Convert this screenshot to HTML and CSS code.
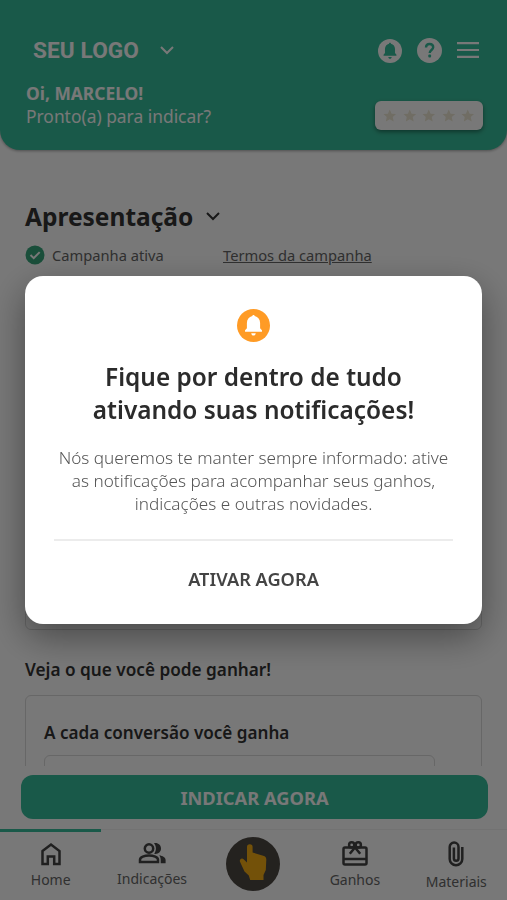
FILE: index.html
```html
<!DOCTYPE html>
<html lang="pt-BR">
<head>
    <meta charset="UTF-8">
    <meta name="viewport" content="width=device-width, initial-scale=1.0">
    <title>Apresentação</title>
    <link rel="stylesheet" href="styles.css">
</head>
<body>

    <header class="header">
        <div class="header-top">
            <div class="logo">
                <span>SEU LOGO</span>
                <svg class="chevron" width="14" height="9" viewBox="0 0 14 9"><path d="M1 1l6 6 6-6"/></svg>
            </div>
            <div class="header-icons">
                <svg class="bell" width="24" height="24" viewBox="0 0 32 32">
                    <circle cx="16" cy="16" r="16"/>
                    <path d="M16 5c-.8 0-1.3.6-1.3 1.2-3.2.8-5.4 3.5-5.4 7v5.5l-1.9 2.2v1.5h17.2v-1.5l-1.9-2.2v-5.5c0-3.5-2.2-6.2-5.4-7 0-.6-.5-1.2-1.3-1.2zM13.7 24h4.6c-.2 1.6-1 2.4-2.3 2.4s-2.1-.8-2.3-2.4z"/>
                </svg>
                <svg class="help" width="25" height="25" viewBox="0 0 25 25">
                    <circle cx="12.5" cy="12.5" r="12.5"/>
                    <path d="M9 9.6c0-2.3 1.5-3.6 3.6-3.6s3.6 1.3 3.6 3.3c0 2.6-3.5 2.8-3.5 5.7"/>
                    <rect x="11.3" y="16.6" width="2.8" height="2.8" rx="1"/>
                </svg>
                <svg class="menu" width="22" height="16" viewBox="0 0 22 16"><path d="M0 1.1h22M0 8h22M0 14.9h22"/></svg>
            </div>
        </div>
        <div class="header-bottom">
            <p class="greeting"><strong>Oi, MARCELO!</strong><br>Pronto(a) para indicar?</p>
            <div class="rating">
                <svg viewBox="0 0 24 24"><path d="M12 1l3.3 7.3 7.9.8-5.9 5.3 1.7 7.9-7-4.1-7 4.1 1.7-7.9L.8 9.1l7.9-.8z"/></svg>
                <svg viewBox="0 0 24 24"><path d="M12 1l3.3 7.3 7.9.8-5.9 5.3 1.7 7.9-7-4.1-7 4.1 1.7-7.9L.8 9.1l7.9-.8z"/></svg>
                <svg viewBox="0 0 24 24"><path d="M12 1l3.3 7.3 7.9.8-5.9 5.3 1.7 7.9-7-4.1-7 4.1 1.7-7.9L.8 9.1l7.9-.8z"/></svg>
                <svg viewBox="0 0 24 24"><path d="M12 1l3.3 7.3 7.9.8-5.9 5.3 1.7 7.9-7-4.1-7 4.1 1.7-7.9L.8 9.1l7.9-.8z"/></svg>
                <svg viewBox="0 0 24 24"><path d="M12 1l3.3 7.3 7.9.8-5.9 5.3 1.7 7.9-7-4.1-7 4.1 1.7-7.9L.8 9.1l7.9-.8z"/></svg>
            </div>
        </div>
    </header>

    <main class="content">
        <h1>
            <span>Apresentação</span>
            <svg class="chevron" width="14" height="9" viewBox="0 0 14 9"><path d="M1 1l6 6 6-6"/></svg>
        </h1>
        <div class="campaign">
            <svg width="20" height="20" viewBox="0 0 20 20">
                <circle cx="10" cy="10" r="9.5"/>
                <path d="M5.5 10l3.2 3.1 6-6"/>
            </svg>
            <span class="status">Campanha ativa</span>
            <a class="terms">Termos da campanha</a>
        </div>
        <div class="banner"></div>
        <h2>Veja o que você pode ganhar!</h2>
        <div class="card">
            <h3>A cada conversão você ganha</h3>
            <div class="card-value"></div>
        </div>
    </main>

    <div class="action">
        <button class="btn-refer">INDICAR AGORA</button>
    </div>

    <nav class="nav">
        <a class="nav-item active">
            <svg width="24" height="24" viewBox="0 0 24 24"><path d="M3.5 9L12 2.5 20.5 9v13h-5.3v-7.5H8.8V22H3.5z"/></svg>
            <span>Home</span>
        </a>
        <a class="nav-item">
            <svg width="30" height="24" viewBox="0 0 30 24">
                <circle cx="12" cy="7.5" r="4.2"/>
                <path d="M3 21v-2.3c0-2.7 4.5-4.2 9-4.2s9 1.5 9 4.2V21z"/>
                <path class="solid" d="M17 2.2c3.8-.8 7 1.7 7 5.3s-3.2 6.1-7 5.3c2.6-3 2.6-7.6 0-10.6zM22.2 14.2c3.6.6 6.4 2.2 6.4 4.8v3.2h-4.9V19c0-1.9-.5-3.5-1.5-4.8z"/>
            </svg>
            <span>Indicações</span>
        </a>
        <a class="nav-item point">
            <svg width="28" height="37" viewBox="0 0 28 37">
                <path d="M8 3a2.8 2.8 0 0 1 5.6 0v5.5L24.2 11.8c2.2.7 3.2 1.8 3.1 4L26.8 26l-2.3 5v5H11.2L9.8 31.5 5.5 27.5 1 17.8c-.9-2.2 1.6-4.4 3.6-2.6L8 18.5z"/>
            </svg>
        </a>
        <a class="nav-item">
            <svg width="26" height="25" viewBox="0 0 26 25">
                <rect x="1.5" y="6.5" width="23" height="17" rx="1.5"/>
                <path d="M1.5 18h23M13 6.5L7.8 12.8M13 6.5l5.2 6.3"/>
                <circle cx="9.7" cy="3.9" r="2.6"/>
                <circle cx="16.3" cy="3.9" r="2.6"/>
            </svg>
            <span>Ganhos</span>
        </a>
        <a class="nav-item files">
            <svg width="18" height="26" viewBox="0 0 18 26"><path d="M15.3 6v12a6.3 6.3 0 0 1-12.6 0V6a4.4 4.4 0 0 1 8.8 0v11.5a2.3 2.3 0 0 1-4.6 0V6.5"/></svg>
            <span>Materiais</span>
        </a>
    </nav>

    <div class="overlay">
        <div class="modal">
            <svg class="modal-icon" width="33" height="33" viewBox="0 0 32 32">
                <circle cx="16" cy="16" r="16"/>
                <path d="M16 5.7c-.8 0-1.2.6-1.2 1.2-3.2.8-5.2 3.3-5.2 6.6v5.2l-1.8 2v1.4h16.4v-1.4l-1.8-2v-5.2c0-3.3-2-5.8-5.2-6.6 0-.6-.4-1.2-1.2-1.2zM13.8 23.6h4.4c-.2 1.6-1 2.2-2.2 2.2s-2-.6-2.2-2.2z"/>
            </svg>
            <h2 class="modal-title">Fique por dentro de tudo<br>ativando suas notificações!</h2>
            <p class="modal-text">Nós queremos te manter sempre informado: ative<br>as notificações para acompanhar seus ganhos,<br>indicações e outras novidades.</p>
            <button class="modal-btn">ATIVAR AGORA</button>
        </div>
    </div>

</body>
</html>
```
FILE: styles.css
```css
* {
    box-sizing: border-box;
}
body {
    display: flex;
    flex-direction: column;
    height: 900px;
    margin: 0;
    overflow: hidden;
    background-color: #fff;
    color: #333;
    font-family: 'Noto Sans', sans-serif;
}
h1, h2, h3, p {
    margin: 0;
}
svg {
    display: block;
    flex: none;
}
button {
    border: none;
    font-family: inherit;
    cursor: pointer;
}
.chevron {
    fill: none;
    stroke: currentColor;
    stroke-width: 2;
}

/* Header */
.header {
    flex: none;
    height: 150px;
    padding: 36px 24px 0 26px;
    background-color: #37bd9b;
    border-radius: 0 0 20px 20px;
    box-shadow: 0 1px 3px rgba(0, 0, 0, 0.35);
    color: #fff;
}
.header-top, .header-bottom {
    display: flex;
    justify-content: space-between;
}
.header-top {
    align-items: center;
    height: 28px;
    padding: 0 4px 0 7px;
}
.logo {
    display: flex;
    align-items: center;
    gap: 21px;
    font: bold 22.6px Roboto, sans-serif;
    letter-spacing: 0.1px;
}
.header-icons {
    display: flex;
    align-items: center;
    gap: 15px;
}
.bell {
    margin-top: 2px;
}
.bell circle, .help circle {
    fill: #fff;
}
.bell path, .help rect {
    fill: #37bd9b;
}
.help path {
    fill: none;
    stroke: #37bd9b;
    stroke-width: 2.4;
}
.menu path {
    stroke: #fff;
    stroke-width: 2.2;
}
.greeting {
    padding-top: 18px;
    font-size: 17.4px;
    line-height: 23.4px;
}
.rating {
    display: flex;
    align-items: center;
    justify-content: center;
    gap: 6px;
    width: 108px;
    height: 29px;
    margin-top: 37px;
    border-radius: 6px;
    background-color: #fff;
    box-shadow: 0 2px 4px rgba(0, 0, 0, 0.4);
}
.rating svg {
    width: 13.5px;
    height: 13.5px;
    fill: #eee8d4;
}

/* Content */
.content {
    flex: none;
    height: 616px;
    padding: 48px 25px 0;
    overflow: hidden;
}
.content h1 {
    display: flex;
    align-items: center;
    gap: 13px;
    height: 36px;
    font-size: 24.5px;
    font-weight: 700;
}
.campaign {
    display: flex;
    align-items: center;
    height: 24px;
    margin-top: 9px;
    font-size: 14.7px;
    color: #666;
}
.campaign circle {
    fill: #37a67b;
}
.campaign path {
    fill: none;
    stroke: #fff;
    stroke-width: 2;
}
.status {
    width: 171px;
    margin-left: 7px;
}
.terms {
    text-decoration: underline;
}
.banner {
    height: 343px;
    margin-top: 20px;
    border: 1px solid #dadada;
    border-radius: 6px;
}
.content > h2 {
    margin-top: 28px;
    font-size: 17.2px;
    font-weight: 600;
    line-height: 24px;
}
.card {
    height: 120px;
    margin-top: 13px;
    padding: 25px 46px 0 18px;
    border: 1px solid #dadada;
    border-radius: 6px;
}
.card h3 {
    font-size: 17.1px;
    font-weight: 600;
    line-height: 24px;
}
.card-value {
    height: 50px;
    margin-top: 10px;
    border: 1px solid #dadada;
    border-radius: 6px;
}

/* Bottom action */
.action {
    flex: none;
    height: 63px;
    padding: 9px 19px 0 21px;
}
.btn-refer {
    width: 100%;
    height: 44px;
    border-radius: 12px;
    background-color: #37bd9b;
    color: #fff;
    font-size: 18.3px;
    font-weight: 700;
}

/* Navigation */
.nav {
    display: grid;
    grid-template-columns: repeat(5, 1fr);
    height: 71px;
    border-top: 1px solid #f2f2f2;
    font-size: 14px;
    color: #666;
}
.nav-item {
    display: flex;
    flex-direction: column;
    align-items: center;
    gap: 4px;
    padding-top: 11px;
    line-height: 20px;
}
.nav-item svg {
    fill: none;
    stroke: #444;
    stroke-width: 2.5;
}
.nav-item.active {
    margin-top: -1px;
    padding-top: 10px;
    border-top: 3px solid #37bd9b;
}
.nav-item .solid {
    fill: #444;
    stroke: none;
}
.nav-item.files {
    gap: 5px;
}
.nav-item.point {
    justify-content: center;
    width: 54px;
    height: 54px;
    margin: 7px auto 0;
    padding: 0 0 3px;
    border-radius: 50%;
    background-color: #4d4843;
}
.nav-item.point svg {
    fill: #f5ac14;
    stroke: none;
}

/* Modal */
.overlay {
    position: fixed;
    inset: 0;
    display: flex;
    justify-content: center;
    align-items: center;
    background-color: rgba(0, 0, 0, 0.53);
}
.modal {
    width: 457px;
    height: 348px;
    padding: 33px 29px 0;
    border-radius: 18px;
    background-color: #fff;
    box-shadow: 0 13px 36px rgba(0, 0, 0, 0.4);
    text-align: center;
}
.modal-icon {
    margin: 0 auto;
}
.modal-icon circle {
    fill: #ff9b25;
}
.modal-icon path {
    fill: #fff;
}
.modal-title {
    margin-top: 18px;
    font-size: 24.4px;
    font-weight: 600;
    line-height: 33px;
    color: #2b2b2b;
}
.modal-text {
    margin-top: 19.5px;
    padding-bottom: 23.5px;
    border-bottom: 2px solid #ececec;
    font-size: 17.15px;
    font-weight: 300;
    line-height: 23.3px;
    color: #555;
}
.modal-btn {
    margin-top: 26px;
    padding: 0;
    background: none;
    color: #444;
    font-size: 18.2px;
    font-weight: 600;
    line-height: 24px;
}
```
